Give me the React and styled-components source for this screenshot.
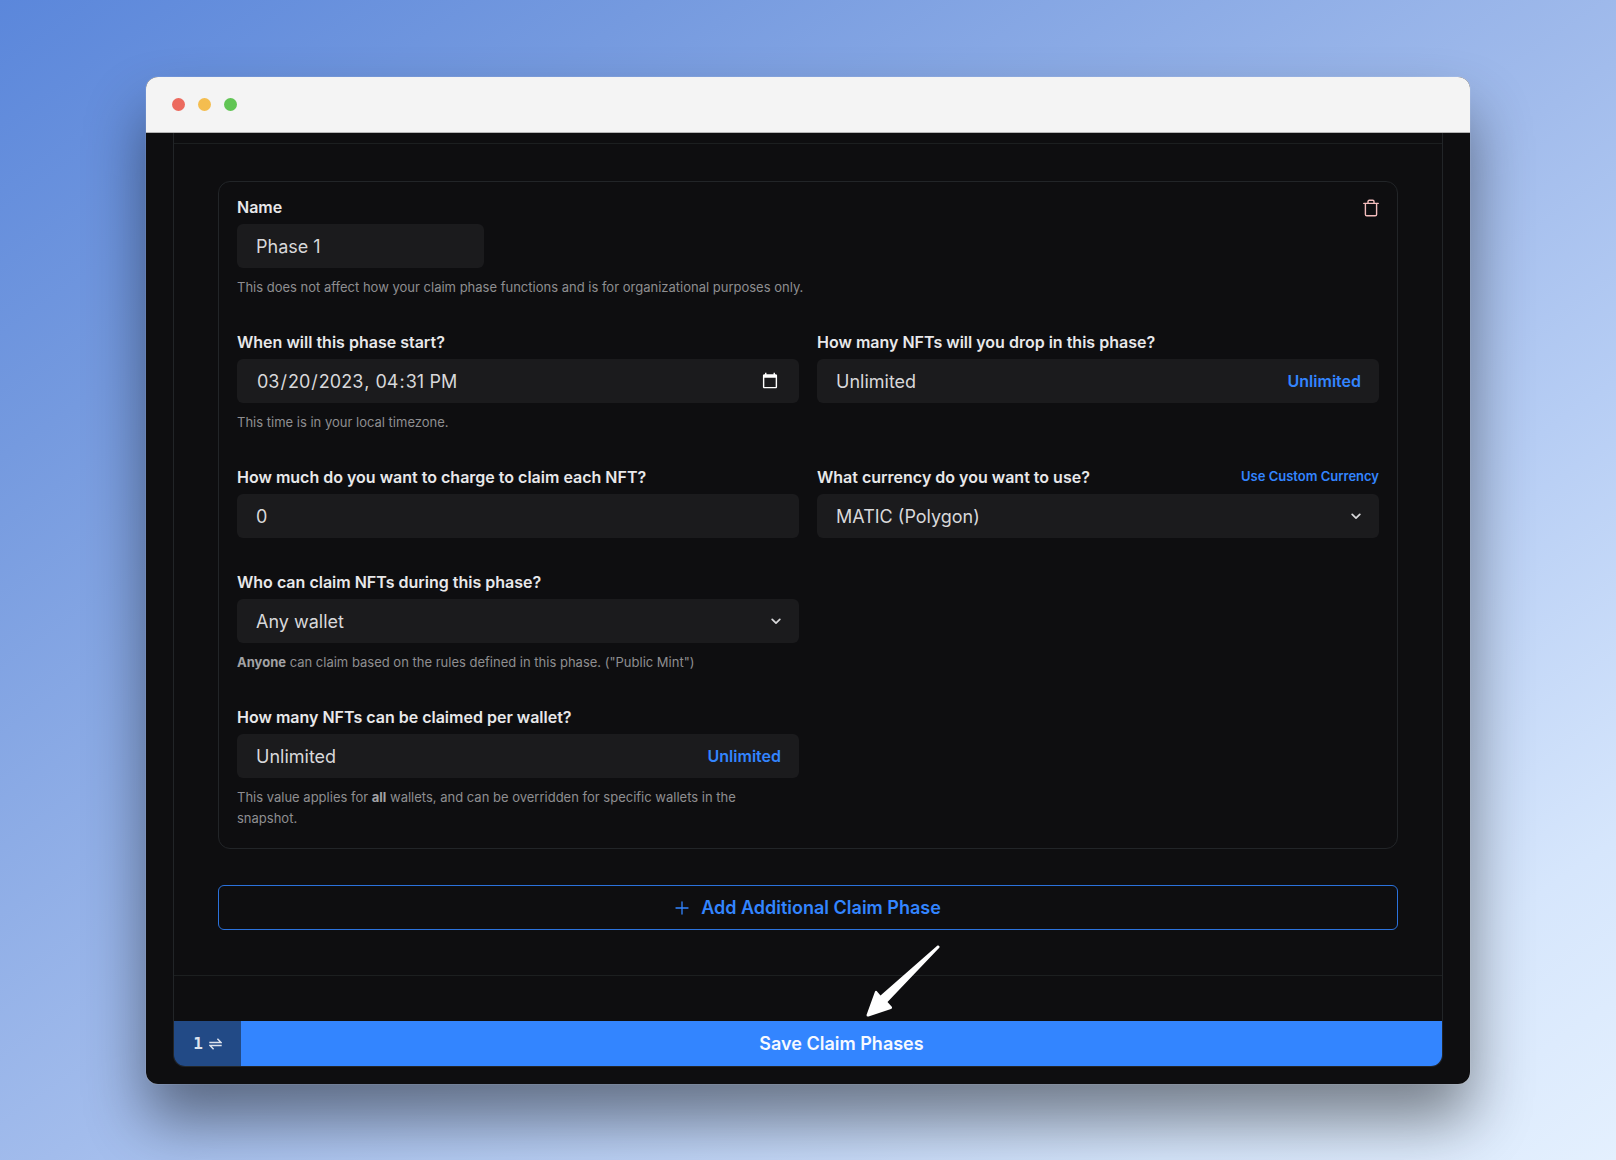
import React from "react";
import styled, { createGlobalStyle } from "styled-components";

const GlobalStyle = createGlobalStyle`
    * {
        box-sizing: border-box;
    }

    body {
        margin: 0;
        font-family: Inter, "Liberation Sans", sans-serif;
        color: #e8e8ea;
    }

    button, input, select {
        font-family: inherit;
    }
`;

const Backdrop = styled.div`
    min-height: 100vh;
    padding: 77px 146px;
    background: linear-gradient(145deg, #5b87db 0%, #759adf 20%, #a2bcec 52%, #b6cdf4 66%, #d6e6fc 86%, #e4f0fe 100%);
`;

const Window = styled.div`
    border-radius: 12px;
    background: #0e0e10;
    box-shadow: 0 0 1px rgba(255, 255, 255, 0.8), 0 36px 60px rgba(0, 0, 0, 0.45);
`;

const TitleBar = styled.div`
    height: 56px;
    padding: 0 26px;
    display: flex;
    align-items: center;
    gap: 13px;
    background: #f4f4f4;
    border-bottom: 1px solid #b4b4b4;
    border-radius: 12px 12px 0 0;
`;

const Light = styled.span`
    width: 13px;
    height: 13px;
    border-radius: 50%;
    background: ${(props) => props.$color};
`;

const Body = styled.main`
    padding: 0 27px 17px;
`;

const Panel = styled.form`
    border: 1px solid #222528;
    border-top: 0;
    border-radius: 0 0 12px 12px;
    padding-top: 10px;
    overflow: hidden;
`;

const Phases = styled.div`
    padding: 37px 44px 45px;
    border-top: 1px solid #1c1f20;
    border-bottom: 1px solid #1c1f20;
    display: flex;
    flex-direction: column;
    gap: 36px;
`;

const Card = styled.section`
    border: 1px solid #222528;
    border-radius: 12px;
    padding: 15px 18px 19px;
    display: flex;
    flex-direction: column;
    gap: 34px;
`;

const Row = styled.div`
    display: grid;
    grid-template-columns: 1fr 1fr;
    gap: 18px;
`;

const NameRow = styled.div`
    display: flex;
    justify-content: space-between;
    align-items: flex-start;
`;

const FieldBox = styled.div`
    display: flex;
    flex-direction: column;
`;

const LabelRow = styled.div`
    display: flex;
    justify-content: space-between;
    align-items: flex-start;
    padding-bottom: 7px;
`;

const Label = styled.label`
    font-size: 16px;
    line-height: 20px;
    font-weight: 600;
`;

const Control = styled.div`
    display: flex;
    align-items: center;
    width: ${(props) => props.$width || "100%"};
    height: 44px;
    padding-right: 18px;
    background: #1b1b1d;
    border-radius: 6px;

    input, select {
        flex: 1;
        min-width: 0;
        height: 44px;
        padding: 0 0 0 19px;
        border: 0;
        outline: 0;
        appearance: none;
        background: transparent;
        color: #d8d8da;
        color-scheme: dark;
        font-size: 18px;
    }
`;

const Hint = styled.p`
    margin: 9px 0 0;
    max-width: ${(props) => props.$wide ? "none" : "540px"};
    color: #8e8e91;
    font-size: 13px;
    line-height: 21px;

    b {
        color: #a2a2a5;
        font-weight: 700;
    }
`;

const TextButton = styled.button`
    padding: 0;
    border: 0;
    background: none;
    color: #3385ff;
    font-size: ${(props) => props.$small ? "13px" : "16px"};
    line-height: 18px;
    font-weight: 600;
`;

const IconButton = styled.button`
    display: flex;
    padding: 0;
    margin-top: 2px;
    border: 0;
    background: none;
    color: #f3bcbc;
`;

const AddButton = styled.button`
    height: 45px;
    display: flex;
    align-items: center;
    justify-content: center;
    gap: 12px;
    border: 1px solid #2b72dc;
    border-radius: 6px;
    background: none;
    color: #3385ff;
    font-size: 18px;
    font-weight: 600;
`;

const Footer = styled.div`
    display: flex;
    margin-top: 45px;
    position: relative;
`;

const Pending = styled.div`
    width: 67px;
    display: flex;
    align-items: center;
    justify-content: center;
    gap: 6px;
    background: #224a86;
    color: #dde3ed;
    font-family: "DejaVu Sans Mono", monospace;
    font-size: 16px;
    font-weight: 700;
`;

const SaveButton = styled.button`
    flex: 1;
    height: 45px;
    padding: 0;
    border: 0;
    background: #3385ff;
    color: #f6f9ff;
    font-size: 18px;
    font-weight: 600;
`;

const Pointer = styled.svg`
    position: absolute;
    left: 54.5%;
    bottom: 48px;
`;

const TrashIcon = () => (
    <svg width="16" height="18" viewBox="0 0 16 18" fill="none" stroke="currentColor" strokeWidth="1.4" strokeLinejoin="round" strokeLinecap="round">
        <path d="M0.8 4.4H15.2M2.4 4.4V15.4Q2.4 16.8 3.8 16.8H12.2Q13.6 16.8 13.6 15.4V4.4M5 4.4V2.6Q5 1.3 6.3 1.3H9.7Q11 1.3 11 2.6V4.4" />
    </svg>
);

const ChevronIcon = () => (
    <svg width="10" height="7" viewBox="0 0 10 7" fill="none" stroke="#d8d8da" strokeWidth="1.7" strokeLinecap="round" strokeLinejoin="round">
        <path d="M1.2 1.4L5 5.2L8.8 1.4" />
    </svg>
);

const PlusIcon = () => (
    <svg width="14" height="14" viewBox="0 0 14 14" stroke="currentColor" strokeWidth="1.3" strokeLinecap="round">
        <path d="M7 1V13M1 7H13" />
    </svg>
);

const SwapIcon = () => (
    <svg width="13" height="12" viewBox="0 0 13 12" fill="none" stroke="currentColor" strokeWidth="1.5">
        <path d="M0.3 4.5H12L8.4 0.8M12.7 7.5H1L4.600 11.2" />
    </svg>
);

const Field = ({ id, label, action, hint, wide, width, children }) => (
    <FieldBox>
        <LabelRow>
            <Label htmlFor={id}>{label}</Label>
            {action}
        </LabelRow>
        <Control $width={width}>{children}</Control>
        {hint ? <Hint $wide={wide}>{hint}</Hint> : null}
    </FieldBox>
);

const App = () => (
    <Backdrop>
        <GlobalStyle />
        <Window>
            <TitleBar>
                <Light $color="#ec6a5e" />
                <Light $color="#f4bd4f" />
                <Light $color="#61c554" />
            </TitleBar>
            <Body>
                <Panel onSubmit={(e) => e.preventDefault()}>
                    <Phases>
                        <Card>
                            <NameRow>
                                <Field
                                    id="name"
                                    label="Name"
                                    width="247px"
                                    wide
                                    hint="This does not affect how your claim phase functions and is for organizational purposes only."
                                >
                                    <input id="name" defaultValue="Phase 1" />
                                </Field>
                                <IconButton type="button" aria-label="Delete phase"><TrashIcon /></IconButton>
                            </NameRow>

                            <Row>
                                <Field id="start" label="When will this phase start?" hint="This time is in your local timezone.">
                                    <input id="start" type="datetime-local" defaultValue="2023-03-20T16:31" />
                                </Field>
                                <Field id="supply" label="How many NFTs will you drop in this phase?">
                                    <input id="supply" defaultValue="Unlimited" />
                                    <TextButton type="button">Unlimited</TextButton>
                                </Field>
                            </Row>

                            <Row>
                                <Field id="price" label="How much do you want to charge to claim each NFT?">
                                    <input id="price" defaultValue="0" />
                                </Field>
                                <Field
                                    id="currency"
                                    label="What currency do you want to use?"
                                    action={<TextButton type="button" $small>Use Custom Currency</TextButton>}
                                >
                                    <select id="currency">
                                        <option>MATIC (Polygon)</option>
                                    </select>
                                    <ChevronIcon />
                                </Field>
                            </Row>

                            <Row>
                                <Field
                                    id="who"
                                    label="Who can claim NFTs during this phase?"
                                    hint={<><b>Anyone</b> can claim based on the rules defined in this phase. ("Public Mint")</>}
                                >
                                    <select id="who">
                                        <option>Any wallet</option>
                                    </select>
                                    <ChevronIcon />
                                </Field>
                            </Row>

                            <Row>
                                <Field
                                    id="limit"
                                    label="How many NFTs can be claimed per wallet?"
                                    hint={<>This value applies for <b>all</b> wallets, and can be overridden for specific wallets in the snapshot.</>}
                                >
                                    <input id="limit" defaultValue="Unlimited" />
                                    <TextButton type="button">Unlimited</TextButton>
                                </Field>
                            </Row>
                        </Card>

                        <AddButton type="button">
                            <PlusIcon />
                            Add Additional Claim Phase
                        </AddButton>
                    </Phases>

                    <Footer>
                        <Pending>1 <SwapIcon /></Pending>
                        <SaveButton type="submit">Save Claim Phases</SaveButton>
                        <Pointer width="76" height="74" viewBox="0 0 76 74" fill="#fff">
                            <path d="M72.5 1.5Q75 1 74.5 3.5L22.5 58L27 63Q27.5 64.5 26 65L3.5 72.5Q1.500 73 1.500 71L10 47.500Q11 46 12.500 48L15.500 51.500Z" />
                        </Pointer>
                    </Footer>
                </Panel>
            </Body>
        </Window>
    </Backdrop>
);

export default App;
